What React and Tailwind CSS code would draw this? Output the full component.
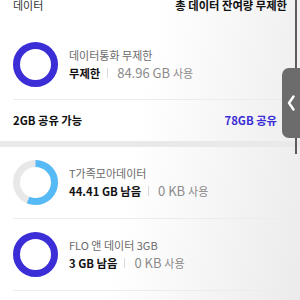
import React from 'react';

const FONT = { fontFamily: '"Noto Sans CJK KR", "Noto Sans", sans-serif' };

// hangul runs are drawn smaller than the digits, as the capture's narrow Korean face does
function K({ children }) {
  const parts = String(children).split(/([\uAC00-\uD7A3]+)/);
  return (
    <>
      {parts.map((p, i) =>
        /[\uAC00-\uD7A3]/.test(p) ? (
          <span key={i} className="text-[11px]">{p}</span>
        ) : (
          <span key={i}>{p}</span>
        )
      )}
    </>
  );
}

function Ring({ color, track, pct = 100 }) {
  const r = 19;
  const c = 2 * Math.PI * r;
  return (
    <svg width="45" height="45" viewBox="0 0 45 45" className="shrink-0">
      <circle cx="22.5" cy="22.5" r={r} fill="none" stroke={track || color} strokeWidth="7" />
      {pct < 100 && (
        <circle
          cx="22.5"
          cy="22.5"
          r={r}
          fill="none"
          stroke={color}
          strokeWidth="7"
          strokeDasharray={`${(c * pct) / 100} ${c}`}
          transform="rotate(-90 22.5 22.5)"
        />
      )}
    </svg>
  );
}

function Item({ ring, title, main, used, pt, pb }) {
  return (
    <div className={`flex items-center border-b border-[#ececec] ${pt} ${pb}`}>
      {ring}
      <div className="ml-[11px] flex flex-col">
        <div className="text-[11px] leading-[17px] text-[#6a6a6a] whitespace-nowrap">{title}</div>
        <div className="flex items-center leading-[17px] whitespace-nowrap">
          <span className="text-[11.3px] font-bold text-[#111]">{main}</span>
          <span className="ml-[7px] mr-[9px] h-[10px] w-px bg-[#dadada]" />
          <span className="text-[13px] text-[#8b8b8b]"><K>{used}</K></span>
        </div>
      </div>
    </div>
  );
}

export default function App() {
  return (
    <div
      className="relative h-[300px] w-[300px] overflow-hidden bg-[linear-gradient(100deg,#ffffff_45%,#ebebeb_100%)]"
      style={FONT}
    >
      <div className="px-[13px]">
        <div className="flex h-[11px] items-center justify-between leading-[11px]">
          <span className="text-[11px] text-[#333]">데이터</span>
          <span className="text-[11.3px] font-bold text-[#111]">총 데이터 잔여량 무제한</span>
        </div>

        <Item
          ring={<Ring color="#3b2ed6" />}
          title="데이터통화 무제한"
          main="무제한"
          used="84.96 GB 사용"
          pt="pt-[31px]"
          pb="pb-[12px]"
        />

        <div className="flex h-[41px] items-center justify-between pr-[10px] text-[11.3px] font-bold">
          <span className="text-[#111]">2GB 공유 가능</span>
          <span className="text-[#3b2ed6]">78GB 공유</span>
        </div>
      </div>

      <div className="h-[6px] bg-[#e9e9e9]" />

      <div className="px-[13px]">
        <Item
          ring={<Ring color="#56baf6" track="#e8e8e8" pct={56} />}
          title="T가족모아데이터"
          main="44.41 GB 남음"
          used="0 KB 사용"
          pt="pt-[13px]"
          pb="pb-[13px]"
        />
        <Item
          ring={<Ring color="#3b2ed6" />}
          title="FLO 앤 데이터 3GB"
          main="3 GB 남음"
          used="0 KB 사용"
          pt="pt-[13px]"
          pb="pb-[13px]"
        />
      </div>

      {/* side drawer handle */}
      <div className="absolute left-[295px] top-0 h-[154px] w-[2px] bg-[#5c5c5c]" />
      <div className="absolute left-[282px] top-[68px] flex h-[70px] w-[22px] items-center rounded-l-[7px] bg-[#6c6c6c] pl-[5px]">
        <svg width="8" height="16" viewBox="0 0 8 16">
          <polyline points="6.5,1.5 2,8 6.5,14.5" fill="none" stroke="#fff" strokeWidth="2.4" strokeLinecap="round" strokeLinejoin="round" />
        </svg>
      </div>
    </div>
  );
}
